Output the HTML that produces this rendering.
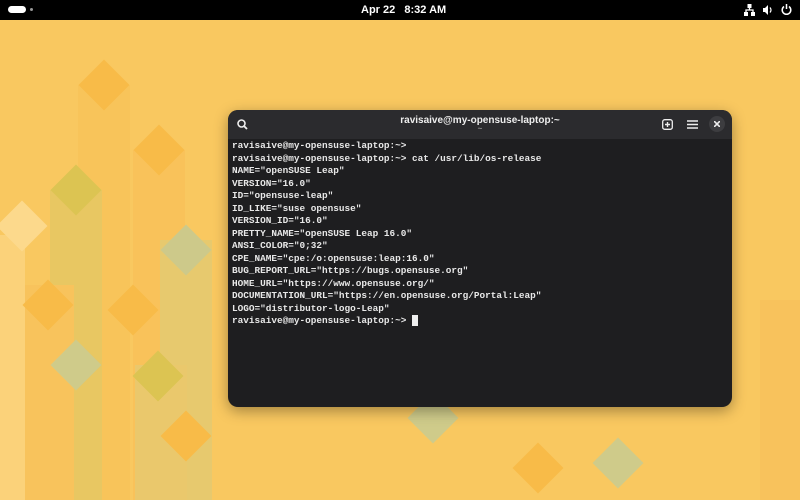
<!DOCTYPE html><html><head><style>
body{margin:0;width:800px;height:500px;overflow:hidden;position:relative;background:#f9c860;font-family:"Liberation Sans",sans-serif}
.top{position:absolute;left:0;top:0;width:800px;height:20px;background:#000;color:#fff;font-size:11px;font-weight:bold}
.col{position:absolute;bottom:0;width:26px}
.dia{position:absolute;width:36px;height:36px;transform:rotate(45deg)}
.term{position:absolute;left:228px;top:110px;width:504px;height:297px;background:#1e1e20;border-radius:10px;box-shadow:0 4px 14px rgba(0,0,0,.35);overflow:hidden}
.hb{height:29px;background:#2b2b2e;position:relative;color:#eee;font-size:10px;font-weight:bold;text-align:center}
pre{margin:0;position:absolute;left:4px;top:30px;font-family:"Liberation Mono",monospace;font-size:9.4px;line-height:12.5px;color:#e8e8e8;font-weight:bold}
</style></head><body>
<div class="col" style="left:78px;top:85px;width:52px;background:#f8c45a"></div>
<div class="col" style="left:50px;top:190px;width:52px;background:#e8c762"></div>
<div class="col" style="left:133px;top:150px;width:52px;background:#f9c25a"></div>
<div class="col" style="left:22px;top:285px;width:52px;background:#f8c35c"></div>
<div class="col" style="left:160px;top:240px;width:52px;background:#e7c96e"></div>
<div class="col" style="left:0;top:235px;width:25px;background:#fbd27a"></div>
<div class="col" style="left:135px;top:365px;width:52px;background:#eac86c"></div>
<div class="dia" style="left:86px;top:67px;background:#f8bb48"></div>
<div class="dia" style="left:141px;top:132px;background:#f8bb48"></div>
<div class="dia" style="left:58px;top:172px;background:#dcc452"></div>
<div class="dia" style="left:4px;top:208px;background:#fcd98c"></div>
<div class="dia" style="left:168px;top:232px;background:#cdc98a"></div>
<div class="dia" style="left:30px;top:287px;background:#f8bb48"></div>
<div class="dia" style="left:115px;top:292px;background:#f8bb48"></div>
<div class="dia" style="left:58px;top:347px;background:#cfcb8a"></div>
<div class="dia" style="left:140px;top:358px;background:#dcc452"></div>
<div class="dia" style="left:168px;top:418px;background:#f8bb48"></div>
<div class="col" style="left:760px;top:300px;width:40px;background:#f8c25c"></div>
<div class="dia" style="left:415px;top:400px;background:#cfcb8a"></div>
<div class="dia" style="left:600px;top:445px;background:#cfcb8a"></div>
<div class="dia" style="left:520px;top:450px;background:#f8bb48"></div>
<div class="top">
<div style="position:absolute;left:8px;top:6px;width:18px;height:7px;border-radius:4px;background:#fff"></div>
<div style="position:absolute;left:30px;top:8px;width:3px;height:3px;border-radius:2px;background:#999"></div>
<div style="position:absolute;left:361px;top:4px">Apr 22&nbsp;&nbsp;&nbsp;8:32 AM</div>
<svg style="position:absolute;left:744px;top:4px" width="11" height="12"><rect x="3.5" y="0" width="4" height="4" fill="#fff"/><rect x="0" y="8" width="4" height="4" fill="#fff"/><rect x="7" y="8" width="4" height="4" fill="#fff"/><path d="M5.5 4v2M2 8V6h7v2" stroke="#fff" stroke-width="1.3" fill="none"/></svg>
<svg style="position:absolute;left:763px;top:4px" width="11" height="12"><path d="M0 4h2l3-3v10l-3-3H0z" fill="#fff"/><path d="M7 3.5q2 2.5 0 5" stroke="#fff" stroke-width="1.2" fill="none"/></svg>
<svg style="position:absolute;left:781px;top:3px" width="11" height="13"><path d="M3 3.5A4.3 4.3 0 1 0 8 3.5" stroke="#fff" stroke-width="1.5" fill="none"/><path d="M5.5 1v5" stroke="#fff" stroke-width="1.5"/></svg>
</div>
<div class="term">
<div class="hb"><div style="position:absolute;left:0;right:0;top:5px">ravisaive@my-opensuse-laptop:~</div><div style="position:absolute;left:0;right:0;top:14px;font-size:8px;color:#888">~</div>
<svg style="position:absolute;left:9px;top:9px" width="11" height="11"><circle cx="4.5" cy="4.5" r="3.5" stroke="#eee" stroke-width="1.6" fill="none"/><line x1="7" y1="7" x2="10" y2="10" stroke="#eee" stroke-width="1.8"/></svg>
<svg style="position:absolute;left:434px;top:9px" width="11" height="11"><rect x="0.7" y="0.7" width="9.6" height="9.6" rx="2" stroke="#eee" stroke-width="1.3" fill="none"/><path d="M5.5 3v5M3 5.5h5" stroke="#eee" stroke-width="1.4"/></svg>
<svg style="position:absolute;left:459px;top:10px" width="11" height="9"><path d="M0 1h11M0 4.5h11M0 8h11" stroke="#eee" stroke-width="1.5"/></svg>
<div style="position:absolute;left:481px;top:6px;width:16px;height:16px;border-radius:8px;background:#3d3d40"></div>
<svg style="position:absolute;left:486px;top:11px" width="6" height="6"><path d="M0 0L6 6M6 0L0 6" stroke="#eee" stroke-width="1.6"/></svg>
</div>
<pre>ravisaive@my-opensuse-laptop:~&gt;
ravisaive@my-opensuse-laptop:~&gt; cat /usr/lib/os-release
NAME="openSUSE Leap"
VERSION="16.0"
ID="opensuse-leap"
ID_LIKE="suse opensuse"
VERSION_ID="16.0"
PRETTY_NAME="openSUSE Leap 16.0"
ANSI_COLOR="0;32"
CPE_NAME="cpe:/o:opensuse:leap:16.0"
BUG_REPORT_URL="https://bugs.opensuse.org"
HOME_URL="https://www.opensuse.org/"
DOCUMENTATION_URL="https://en.opensuse.org/Portal:Leap"
LOGO="distributor-logo-Leap"
ravisaive@my-opensuse-laptop:~&gt; <span style="background:#eee">&nbsp;</span></pre>
</div>
</body></html>
